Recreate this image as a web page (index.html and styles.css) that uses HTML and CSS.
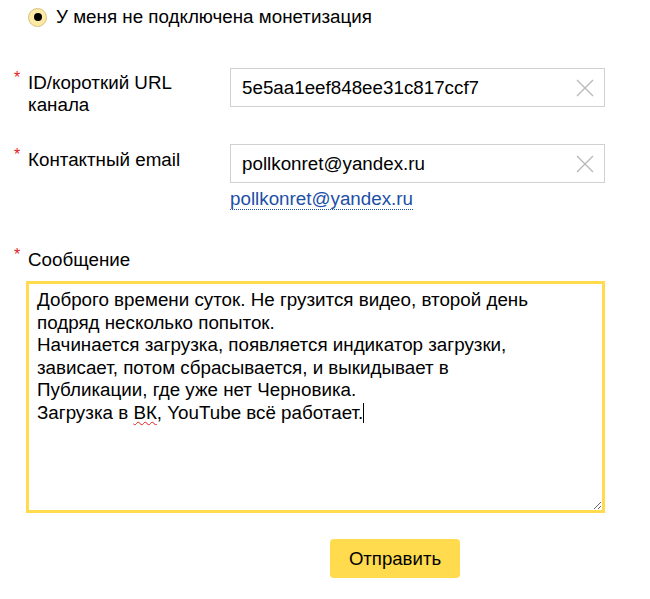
FILE: index.html
```html
<!DOCTYPE html>
<html lang="ru">
<head>
<meta charset="utf-8">
<title>Форма</title>
<link rel="stylesheet" href="styles.css">
</head>
<body>
<form class="form">
  <label class="radio-row">
    <span class="radio"><span class="radio-dot"></span></span>
    <span class="radio-text">У меня не подключена монетизация</span>
  </label>

  <div class="row row-id">
    <div class="label"><span class="req">*</span><span class="label-text">ID/короткий URL<br>канала</span></div>
    <div class="field">
      <div class="input">
        <span class="input-value">5e5aa1eef848ee31c817ccf7</span>
        <svg class="clear" width="18" height="18" viewBox="0 0 18 18"><path d="M1 1L17 17M17 1L1 17" stroke="#b8b8b8" stroke-width="1.3" fill="none"/></svg>
      </div>
    </div>
  </div>

  <div class="row row-email">
    <div class="label"><span class="req">*</span><span class="label-text">Контактный email</span></div>
    <div class="field">
      <div class="input">
        <span class="input-value">pollkonret@yandex.ru</span>
        <svg class="clear" width="18" height="18" viewBox="0 0 18 18"><path d="M1 1L17 17M17 1L1 17" stroke="#b8b8b8" stroke-width="1.3" fill="none"/></svg>
      </div>
      <a class="suggest" href="#">pollkonret@yandex.ru</a>
    </div>
  </div>

  <div class="msg-label"><span class="req">*</span><span class="label-text">Сообщение</span></div>
  <div class="textarea">Доброго времени суток. Не грузится видео, второй день подряд несколько попыток.<br>Начинается загрузка, появляется индикатор загрузки, зависает, потом сбрасывается, и выкидывает в Публикации, где уже нет Черновика.<br>Загрузка в <span class="spell">ВК</span>, YouTube всё работает.<span class="caret"></span></div>

  <div class="actions">
    <button type="button" class="submit">Отправить</button>
  </div>
</form>
</body>
</html>
```

FILE: styles.css
```css
html, body {
  margin: 0;
  padding: 0;
  background: #fff;
}
body {
  font-family: "Liberation Sans", Arial, sans-serif;
  font-size: 18.8px;
  color: #000;
}
.form {
  width: 605px;
  padding: 7px 0 0 0;
}
.radio-row {
  display: flex;
  align-items: center;
  gap: 9px;
  padding-left: 28px;
  height: 20px;
  line-height: 20px;
}
.radio {
  width: 17px;
  height: 17px;
  border-radius: 50%;
  background: #fde9a6;
  border: 1px solid #d9c27a;
  display: flex;
  align-items: center;
  justify-content: center;
}
.radio-dot {
  width: 8px;
  height: 8px;
  border-radius: 50%;
  background: #000;
}
.row {
  display: grid;
  grid-template-columns: 230px 375px;
}
.row-id { margin-top: 41px; }
.row-email { margin-top: 28px; }
.label {
  display: flex;
  padding-left: 14px;
  padding-top: 4px;
  line-height: 22px;
}
.row-email .label {
  padding-top: 5px;
}
.req {
  color: #e52020;
  font-size: 16px;
  width: 14px;
  line-height: 16px;
  margin-top: -2px;
}
.label-text {
  line-height: 22px;
}
.input {
  height: 37px;
  border: 1px solid #d0d0d0;
  display: flex;
  align-items: center;
  justify-content: space-between;
  padding: 0 10px 0 11px;
}
.input-value {
  line-height: 20px;
}
.clear {
  display: block;
  margin-top: 1px;
}
.suggest {
  display: inline-block;
  margin-top: 5px;
  color: #1c4fa6;
  text-decoration: none;
  border-bottom: 1px dotted #1c4fa6;
  line-height: 21px;
}
.msg-label {
  display: flex;
  margin-top: 39px;
  padding-left: 14px;
  line-height: 22px;
}
.textarea {
  box-sizing: border-box;
  margin-top: 10px;
  margin-left: 26px;
  width: 579px;
  height: 232px;
  border: 3px solid #ffdb4d;
  padding: 5px 56px 10px 8px;
  font-size: 18.8px;
  line-height: 22.5px;
  overflow: auto;
  resize: both;
}
.spell {
  text-decoration: underline wavy #e02020;
  text-decoration-thickness: 1px;
  text-underline-offset: 2px;
}
.caret {
  display: inline-block;
  width: 1px;
  height: 20px;
  background: #000;
  vertical-align: -4px;
}
.actions {
  display: flex;
  padding-left: 330px;
  margin-top: 26px;
}
.submit {
  width: 130px;
  height: 39px;
  border: 0;
  border-radius: 4px;
  background: #ffdb4d;
  font-family: "Liberation Sans", Arial, sans-serif;
  font-size: 18.6px;
  color: #000;
  padding: 0;
}
```
